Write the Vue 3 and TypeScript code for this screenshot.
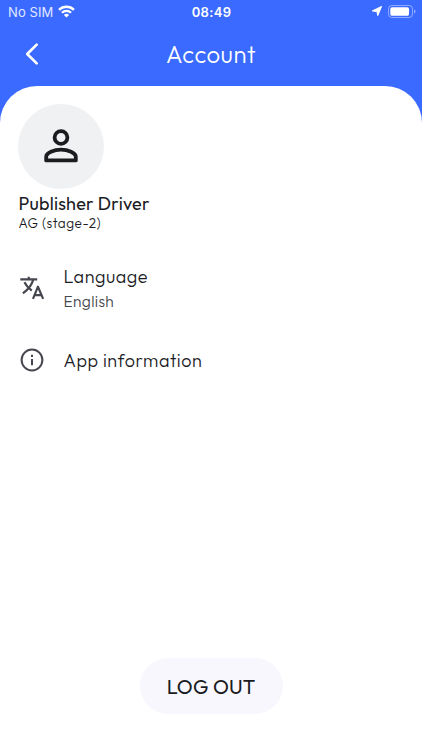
<script setup lang="ts">
import { ref } from 'vue'

interface Item {
  id: 'language' | 'info'
  title: string
  value?: string
}

const user = ref({ name: 'Publisher Driver', group: 'AG (stage-2)' })
const items: Item[] = [
  { id: 'language', title: 'Language', value: 'English' },
  { id: 'info', title: 'App information' },
]
</script>

<template>
  <div class="screen">
    <div class="status">
      <div class="carrier">
        <span class="sim">No SIM</span>
        <svg width="17" height="13" viewBox="0 0 17 13" fill="none" stroke="#fff" stroke-width="2.3">
          <path d="M1 4.9C5.1.7 11.9.7 16 4.9" />
          <path d="M3.9 7.8C6.5 5.2 10.5 5.2 13.1 7.8" />
          <path d="M8.5 12.6L5.9 9.9C7.4 8.5 9.6 8.5 11.1 9.9Z" fill="#fff" stroke="none" />
        </svg>
      </div>
      <span class="time">08:49</span>
      <div class="indicators">
        <svg width="12" height="12" viewBox="0 0 12 12"><path d="M10.6 1.4L6.8 10.6 5.9 6.6 1.3 5.9Z" fill="#fff" stroke="#fff" stroke-width="1" stroke-linejoin="round" /></svg>
        <svg width="28" height="13" viewBox="0 0 28 13">
          <rect x=".5" y=".5" width="24" height="12" rx="3.4" fill="none" stroke="#fff" stroke-opacity=".42" />
          <rect x="2.3" y="2.2" width="18.7" height="8.6" rx="1.9" fill="#fff" />
          <path d="M26 4.4Q27.5 5 27.5 6.5T26 8.6Z" fill="#fff" fill-opacity=".45" />
        </svg>
      </div>
    </div>
    <header class="bar">
      <button class="back" aria-label="Back">
        <svg width="14" height="24" viewBox="0 0 14 24" fill="none" stroke="#fff" stroke-width="2.7" stroke-linecap="round" stroke-linejoin="round"><path d="M11.7 2.6L2.2 12 11.7 21.4" /></svg>
      </button>
      <h1>Account</h1>
    </header>
    <main class="sheet">
      <div class="avatar">
        <svg width="34" height="34" viewBox="0 0 34 34" fill="none" stroke="#1b1c1f" stroke-width="3.8" stroke-linejoin="round">
          <circle cx="17" cy="8.5" r="6.4" />
          <path d="M2.2 31.4V27.8C2.2 24 10 20.6 17 20.6S31.8 24 31.8 27.8V31.4Z" />
        </svg>
      </div>
      <div class="name"><span>{{ user.name }}</span></div>
      <div class="group"><span>{{ user.group }}</span></div>
      <ul class="menu">
        <li v-for="item in items" :key="item.id" :class="item.id">
          <svg v-if="item.id === 'language'" class="icon" width="26" height="26" viewBox="0 0 24 24" fill="none" stroke="#45464e" stroke-width="2" stroke-linejoin="round">
            <path d="M1.2 4H16.8M9 1.5V4M13.2 4C12.2 9 8.7 13.2 3.6 17M5.1 6.6C6.4 9.6 9.2 12.4 11.8 14.4M12.9 22L17.5 10.8 22.3 22M14.3 18.6H20.8" />
          </svg>
          <svg v-else class="icon" width="26" height="26" viewBox="0 0 26 26" fill="none" stroke="#45464e" stroke-width="2">
            <circle cx="13" cy="13" r="10.4" />
            <path d="M13 12V18.3M13 7.7V9.9" stroke-width="2" />
          </svg>
          <div class="label">
            <div class="title"><span>{{ item.title }}</span></div>
            <div v-if="item.value" class="value"><span>{{ item.value }}</span></div>
          </div>
        </li>
      </ul>
      <button class="logout"><span>LOG OUT</span></button>
    </main>
  </div>
</template>

<style>
body {
  margin: 0;
}
</style>

<style scoped>
.screen {
  display: flex;
  flex-direction: column;
  height: 750px;
  overflow: hidden;
  background: linear-gradient(#3a6aff 0 130px, #fff 130px);
  font-family: Outfit, Lato, sans-serif;
  color: #1b1c1f;
  white-space: nowrap;
}
.status {
  display: grid;
  grid-template-columns: 1fr auto 1fr;
  align-items: center;
  height: 24px;
  padding: 0 6px 0 8px;
  box-sizing: border-box;
  color: #fff;
  font-family: Inter, sans-serif;
}
.carrier {
  display: flex;
  align-items: center;
  gap: 5px;
  font-size: 13px;
}
.carrier svg {
  margin-top: -1px;
}
.sim {
  letter-spacing: 0.1px;
  opacity: 0.85;
}
.time {
  font-size: 13px;
  font-weight: 600;
  letter-spacing: 0.3px;
  margin-right: 1px;
}
.indicators {
  display: flex;
  justify-content: flex-end;
  align-items: center;
  gap: 5px;
  height: 22px;
  margin-top: -2px;
}
.bar {
  display: grid;
  grid-template-columns: 64px 1fr 64px;
  align-items: center;
  height: 61.5px;
  flex: none;
}
button {
  border: 0;
  font-family: inherit;
  color: inherit;
}
.back {
  display: flex;
  padding: 0 0 1px 24.5px;
  background: none;
}
h1 {
  margin: 0 0 2px;
  text-align: center;
  color: #fff;
  font-size: 24px;
  line-height: 30px;
  font-weight: 340;
  letter-spacing: 0.5px;
}
.sheet {
  display: flex;
  flex-direction: column;
  align-items: flex-start;
  flex: 1;
  box-sizing: border-box;
  padding: 18px 18px 36.5px;
  border-radius: 37px 37px 0 0;
  background: #fff;
}
.avatar {
  display: grid;
  place-items: center;
  width: 86px;
  height: 85.5px;
  border-radius: 50%;
  background: #f0f1f3;
}
.name {
  margin-top: 3px;
  padding-left: 0.4px;
  font-size: 18px;
  line-height: 23px;
  font-weight: 400;
  letter-spacing: 0.22px;
}
.group {
  padding-left: 0.5px;
  font-size: 13.5px;
  line-height: 16px;
  font-weight: 330;
  letter-spacing: 0.5px;
}
.menu {
  margin: 32px 0 0;
  padding: 0;
  list-style: none;
}
.menu li {
  display: flex;
  align-items: center;
  gap: 19px;
  padding-left: 0.5px;
}
.language {
  height: 50px;
}
.info {
  height: 30px;
  margin-top: 32px;
}
.info .title {
  padding-top: 2px;
}
.title {
  font-size: 18px;
  line-height: 26px;
  font-weight: 350;
  letter-spacing: 0.53px;
}
.value {
  font-size: 15.5px;
  line-height: 22px;
  font-weight: 330;
  letter-spacing: 0.35px;
  color: #45464e;
}
.logout {
  align-self: center;
  width: 143px;
  height: 56px;
  margin-top: auto;
  padding: 1px 0 0;
  border-radius: 28px;
  background: #f8f7fe;
  font-size: 20px;
  font-weight: 410;
  letter-spacing: 0.2px;
}
</style>
